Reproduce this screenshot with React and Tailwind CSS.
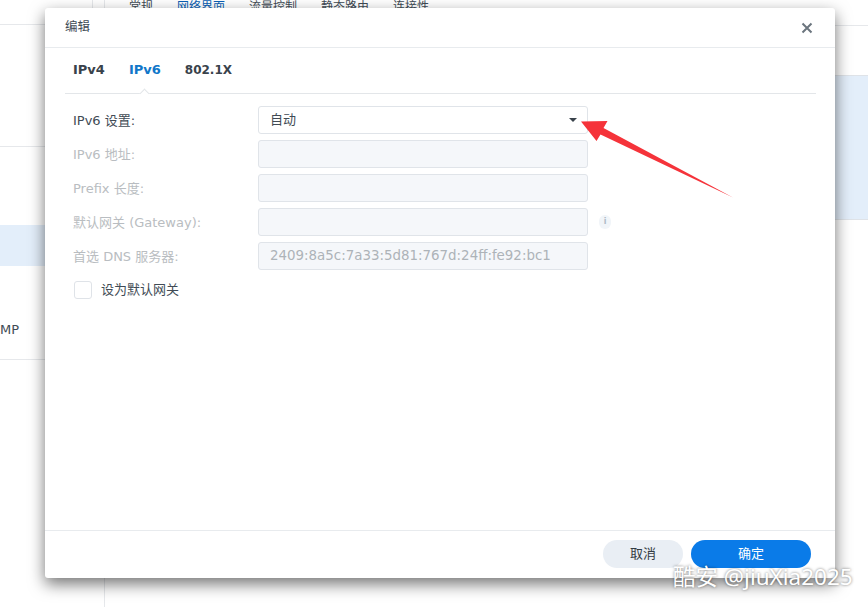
import React from "react";

const font = { fontFamily: '"DejaVu Sans","Noto Sans CJK SC",sans-serif' };

function Row({ label, disabled, children, after }) {
  return (
    <div className="flex items-center h-[28px]">
      <div className={`w-[193px] pl-[8px] pt-[1px] text-[13px] ${disabled ? "text-[#b9bdc1]" : "text-[#414b55]"}`}>{label}</div>
      <div className={`w-[330px] h-[28px] rounded-[3px] border flex items-center pl-[11px] pr-[10px] ${disabled ? "bg-[#f5f7fa] border-[#e0e4e9] text-[#adb3b8] text-[13.4px] pt-[1px]" : "bg-white border-[#e0e4e9] text-[#414b55] text-[13px]"}`}>
        {children}
      </div>
      {after}
    </div>
  );
}

export default function App() {
  return (
    <div style={font} className="relative w-[868px] h-[607px] overflow-hidden bg-white flex">
      {/* page behind the dialog */}
      <aside className="w-[105px] shrink-0 border-r border-[#e6e8eb] flex flex-col">
        <div className="h-[25px] w-[93px] border-r border-b border-[#e6e8eb]" />
        <div className="h-[122px] border-b border-[#e6e8eb]" />
        <div className="h-[78px]" />
        <div className="h-[41px] bg-[#e3eefa]" />
        <div className="h-[94px] border-b border-[#e6e8eb] flex items-end pb-[20px]">
          <span className="text-[13px] text-[#414b55] leading-[18px]">MP</span>
        </div>
      </aside>
      <main className="flex-1 flex flex-col">
        <nav className="h-[26px] border-b border-[#e6e8eb] flex gap-[24px] pl-[24px] text-[12px] leading-[14px] text-[#414b55]">
          <span>常规</span>
          <span className="text-[#0a5fb4]">网络界面</span>
          <span>流量控制</span>
          <span>静态路由</span>
          <span>连接性</span>
        </nav>
        <div className="mt-[49px] h-[145px] bg-[#e3eefa] border-y border-[#dfe3e8]" />
      </main>

      {/* dialog */}
      <section className="absolute left-[45px] top-[8px] w-[790px] h-[570px] bg-white rounded-[3px] shadow-[0_6px_16px_rgba(0,0,0,0.55)] flex flex-col">
        <header className="h-[40px] shrink-0 border-b border-[#e8ebee] flex items-center justify-between pl-[20px] pr-[22px] text-[12.5px] text-[#414b55]">
          <span>编辑</span>
          <svg width="12" height="12" viewBox="0 0 12 12" fill="none" stroke="#6b757e" strokeWidth="2"><path d="M1.5 1.5l9 9M10.5 1.5l-9 9" /></svg>
        </header>
        <div className="flex-1 px-[20px] pr-[19px]">
          <div className="relative h-[46px] border-b border-[#e3e6e9] flex items-center gap-[24px] pl-[8px] pb-[2px] text-[13px] font-bold text-[#39424b]">
            <span>IPv4</span>
            <span className="text-[#1177c9]">IPv6</span>
            <span className="text-[12px]">802.1X</span>
            <div className="absolute left-[76px] bottom-[-4px] w-[7px] h-[7px] rotate-45 bg-white border-l border-t border-[#e3e6e9]" />
          </div>
          <div className="mt-[12px] flex flex-col gap-[6px]">
            <Row label="IPv6 设置:">
              <span className="flex-1">自动</span>
              <span className="w-0 h-0 border-x-[4.5px] border-x-transparent border-t-[4px] border-t-[#39424b]" />
            </Row>
            <Row label="IPv6 地址:" disabled />
            <Row label="Prefix 长度:" disabled />
            <Row
              label="默认网关 (Gateway):"
              disabled
              after={
                <span className="ml-[11px] w-[12px] h-[14px] flex items-center justify-center rounded-full bg-[#f1f5f9] text-[8px] font-bold text-[#aebbc7]">i</span>
              }
            />
            <Row label="首选 DNS 服务器:" disabled>
              2409:8a5c:7a33:5d81:767d:24ff:fe92:bc1
            </Row>
          </div>
          <label className="mt-[10px] ml-[9px] flex items-center gap-[9px] text-[13px] text-[#414b55]">
            <span className="w-[18px] h-[18px] rounded-[3px] border border-[#dfe3e8] bg-white" />
            设为默认网关
          </label>
        </div>
        <footer className="h-[48px] shrink-0 border-t border-[#e8ebee] flex items-center justify-end gap-[8px] pr-[24px] pb-[1px] text-[13px]">
          <button className="w-[80px] h-[28px] rounded-full bg-[#e9eef4] text-[#333b43]">取消</button>
          <button className="w-[120px] h-[28px] rounded-full bg-[#0a7be8] text-white">确定</button>
        </footer>
      </section>

      {/* annotation arrow */}
      <svg className="absolute left-[570px] top-[110px]" width="170" height="92" viewBox="570 110 170 92">
        <path d="M581 121.5 L607.5 121 L603.5 128 L733 197.5 L600.5 134.5 L596.5 141 Z" fill="#f5333a" />
      </svg>

      {/* watermark */}
      <span className="absolute left-[673px] top-[564px] text-[22.5px] leading-[26px] text-white [text-shadow:0_0_3px_rgba(0,0,0,0.55)]" style={{ fontFamily: '"Noto Sans","Noto Sans CJK SC",sans-serif' }}>
        酷安 @jiuXia2025
      </span>
    </div>
  );
}
